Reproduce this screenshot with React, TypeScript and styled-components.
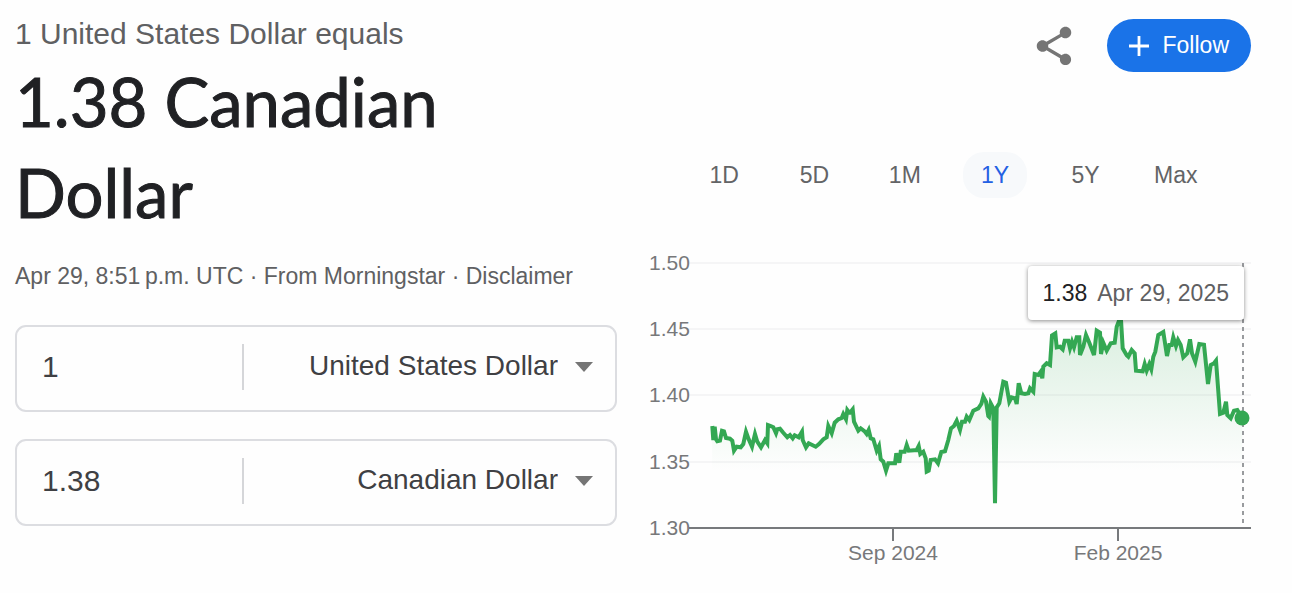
import React from "react";
import styled, { createGlobalStyle, css } from "styled-components";
import { MdShare } from "react-icons/md";

const Global = createGlobalStyle`
  *, *::before, *::after { box-sizing: border-box; }
  body {
    margin: 0;
    background: #fefefe;
    font-family: "Liberation Sans", Arial, sans-serif;
    color: #202124;
  }
  button, input, select { font-family: inherit; }
`;

const Page = styled.main`
  display: grid;
  grid-template-columns: minmax(0, 1fr) minmax(0, 1fr);
  gap: 32px;
  padding: 16px 41px 16px 15px;
`;

const Column = styled.section`
  display: flex;
  flex-direction: column;
`;

const Lead = styled.p`
  margin: 0;
  font-size: 30px;
  line-height: 36px;
  color: #5f6062;
`;

const Headline = styled.h1`
  margin: 4px 96px 0 0;
  font-family: Lato, "Liberation Sans", sans-serif;
  font-weight: 400;
  font-size: 67px;
  line-height: 91px;
  color: #202124;
  -webkit-text-stroke: 1px #202124;
`;

const Meta = styled.p`
  margin: 24px 0 0;
  font-size: 23px;
  line-height: 28px;
  color: #5f6062;
  white-space: nowrap;
`;

const MetaLink = styled.a`
  color: inherit;
  text-decoration: none;
`;

const Form = styled.form`
  display: flex;
  flex-direction: column;
  gap: 27px;
  margin-top: 35px;
`;

const CurrencyRow = styled.div`
  display: flex;
  align-items: center;
  height: 87px;
  padding-bottom: 4px;
  border: 2px solid #dcdde1;
  border-radius: 11px;
`;

const Amount = styled.input`
  flex: 0 0 38%;
  min-width: 0;
  height: 46px;
  padding: 0 25px;
  border: 0;
  border-right: 2px solid #d5d6d9;
  background: transparent;
  font-size: 30px;
  color: #3f4043;
  outline: none;
`;

const Picker = styled.div`
  position: relative;
  flex: 1;
  min-width: 0;
`;

const Select = styled.select`
  width: 100%;
  height: 46px;
  padding: 0 57px 2px 16px;
  border: 0;
  background: transparent;
  appearance: none;
  font-size: 28px;
  text-align-last: right;
  color: #3f4043;
  outline: none;
`;

const Caret = styled.svg`
  position: absolute;
  right: 22px;
  top: 18px;
  width: 18px;
  height: 10px;
  pointer-events: none;
  fill: #757575;
`;

const Actions = styled.div`
  display: flex;
  justify-content: flex-end;
  align-items: center;
  gap: 30px;
  margin-top: 3px;
`;

const ShareButton = styled.button`
  display: flex;
  padding: 0;
  border: 0;
  background: none;
  color: #757575;
  cursor: pointer;
`;

const FollowButton = styled.button`
  display: flex;
  align-items: center;
  gap: 14px;
  height: 53px;
  padding: 0 22px;
  border: 0;
  border-radius: 27px;
  background: #1a73e8;
  color: #fff;
  font-size: 23px;
  cursor: pointer;
`;

const Ranges = styled.div`
  display: grid;
  grid-template-columns: repeat(6, 1fr);
  justify-items: center;
  margin: 80px 30px 0;
`;

const RangeButton = styled.button<{ $active: boolean }>`
  min-width: 64px;
  height: 46px;
  padding: 0 8px;
  border: 0;
  border-radius: 21px;
  background: transparent;
  font-size: 23px;
  color: #636466;
  cursor: pointer;
  ${({ $active }) =>
    $active &&
    css`
      background: #f7f9fb;
      color: #2360e3;
    `}
`;

const ChartArea = styled.div`
  position: relative;
  margin-top: 52px;
`;

const Chart = styled.svg`
  display: block;
  width: 100%;
  height: auto;
`;

const AxisLabel = styled.text`
  font-size: 21px;
  fill: #77787a;
`;

const Tooltip = styled.div`
  position: absolute;
  top: 16px;
  right: 7px;
  display: flex;
  align-items: center;
  gap: 10px;
  height: 54px;
  padding: 0 15px;
  border-radius: 4px;
  background: #fff;
  box-shadow: 0 1px 4px rgba(0, 0, 0, 0.45);
  font-size: 23px;
  color: #5f6062;
  white-space: nowrap;
`;

const TooltipValue = styled.span`
  color: #202124;
`;

/* Exchange-rate trace, split into stretches of the year; each point is in thirds of a chart unit. */
const stretches: { x: number; y: number; points: number[][] }[] = [
  {
    x: 51,
    y: 130,
    points: [
      [37, 138], [40, 180], [44, 140], [48, 178], [52, 184], [60, 182], [66, 152], [72, 154], [78, 174], [90, 176],
      [97, 182], [102, 212], [110, 200], [122, 202], [130, 192], [138, 155], [146, 178], [156, 200],
      [165, 162], [172, 185], [183, 202], [195, 180], [202, 190], [204, 135], [212, 138], [220, 142],
      [228, 160], [232, 148], [240, 146], [250, 158], [262, 172], [270, 165], [278, 175], [284, 166],
      [296, 172], [306, 155], [308, 180], [318, 202], [326, 190], [335, 194], [347, 200], [357, 192],
      [370, 178], [380, 172], [385, 138], [395, 160], [404, 128], [415, 118], [425, 114], [430, 102],
      [438, 118], [442, 90], [448, 98],
    ],
  },
  {
    x: 191,
    y: 130,
    points: [
      [30, 98], [38, 88], [42, 125], [55, 152], [62, 145], [75, 155], [80, 162], [86, 150], [92, 175],
      [100, 178], [110, 212], [117, 198], [122, 238], [130, 245], [138, 272], [145, 250], [165, 250],
      [169, 220], [178, 248], [182, 215], [194, 215], [200, 195], [206, 212], [230, 210], [236, 198],
      [241, 222], [250, 215], [257, 235], [260, 275], [266, 272], [272, 240], [285, 238], [294, 250],
      [304, 216], [315, 214], [325, 180], [333, 145], [342, 138], [350, 122], [360, 150], [366, 125],
      [375, 125], [380, 110], [388, 120], [400, 92], [415, 85], [424, 72], [430, 50], [438, 65],
      [445, 108],
    ],
  },
  {
    x: 331,
    y: 60,
    points: [
      [27, 320], [32, 280], [40, 295], [45, 580], [50, 292], [58, 280], [70, 215], [78, 218], [88, 275],
      [95, 262], [105, 265], [110, 282], [116, 220], [124, 250], [135, 252], [145, 250], [150, 235],
      [160, 245], [164, 192], [175, 195], [182, 185], [187, 205], [190, 170], [200, 160], [210, 165],
      [216, 76], [226, 70], [230, 112], [240, 110], [248, 118], [254, 92], [265, 92], [270, 115],
      [276, 95], [282, 112], [290, 82], [298, 82], [300, 135], [310, 110], [318, 75], [328, 98],
      [342, 135], [350, 62], [360, 68], [363, 132], [370, 98], [380, 122], [392, 100], [404, 98],
      [410, 50], [418, 30], [423, 30], [428, 115], [440, 136],
    ],
  },
  {
    x: 461,
    y: 60,
    points: [
      [55, 140], [65, 120], [74, 130], [78, 182], [98, 184], [104, 162], [110, 182], [118, 162],
      [124, 178], [130, 140], [136, 125], [145, 75], [160, 66], [171, 138], [178, 105], [185, 105],
      [190, 82], [198, 108], [204, 90], [212, 105], [220, 142], [232, 130], [240, 88], [246, 130],
      [256, 155], [268, 102], [282, 104], [294, 222], [302, 165], [312, 160], [318, 152], [330, 312],
      [340, 308], [348, 275], [352, 315], [362, 325], [372, 302], [382, 300], [397, 325],
    ],
  },
];

const trace = stretches
  .flatMap((s) => s.points.map(([px, py]) => `${(s.x + px / 3).toFixed(1)} ${(s.y + py / 3).toFixed(1)}`))
  .join(" L");

const levels = [
  { label: "1.50", y: 13 },
  { label: "1.45", y: 79 },
  { label: "1.40", y: 145 },
  { label: "1.35", y: 212 },
  { label: "1.30", y: 278 },
];

const months = [
  { label: "Sep 2024", x: 244 },
  { label: "Feb 2025", x: 469 },
];

const ranges = ["1D", "5D", "1M", "1Y", "5Y", "Max"];
const currencies = ["United States Dollar", "Canadian Dollar"];

function CurrencyField({ id, amount, currency }: { id: string; amount: string; currency: string }) {
  return (
    <CurrencyRow>
      <Amount id={`${id}-amount`} aria-label={`Amount in ${currency}`} defaultValue={amount} />
      <Picker>
        <Select id={`${id}-currency`} aria-label="Currency" defaultValue={currency}>
          {currencies.map((c) => (
            <option key={c}>{c}</option>
          ))}
        </Select>
        <Caret viewBox="0 0 18 10" aria-hidden="true">
          <path d="M0 0h18L9 10z" />
        </Caret>
      </Picker>
    </CurrencyRow>
  );
}

function RateChart() {
  return (
    <ChartArea>
      <Chart viewBox="0 0 602 325" role="img" aria-label="Exchange rate over one year">
        <defs>
          <linearGradient id="fade" gradientUnits="userSpaceOnUse" x1="0" y1="70" x2="0" y2="222">
            <stop offset="0" stopColor="#34a853" stopOpacity="0.18" />
            <stop offset="1" stopColor="#34a853" stopOpacity="0" />
          </linearGradient>
        </defs>
        {levels.map(({ label, y }, i) => {
          const base = i === levels.length - 1;
          return (
            <g key={label}>
              <line x1="40" x2="602" y1={y} y2={y} stroke={base ? "#77797c" : "#f5f5f6"} strokeWidth="2" />
              <AxisLabel x="0" y={y + 7}>
                {label}
              </AxisLabel>
            </g>
          );
        })}
        {months.map(({ label, x }) => (
          <g key={label}>
            <line x1={x} x2={x} y1="278" y2="291" stroke="#77797c" strokeWidth="2" />
            <AxisLabel x={x} y="310" textAnchor="middle">
              {label}
            </AxisLabel>
          </g>
        ))}
        <path d={`M63 278 L${trace} L593 278 Z`} fill="url(#fade)" />
        <line x1="594" x2="594" y1="13" y2="276" stroke="#999b9e" strokeWidth="2" strokeDasharray="4 4" />
        <path d={`M${trace}`} fill="none" stroke="#34a853" strokeWidth="4" />
        <circle cx="593" cy="168" r="7.5" fill="#34a853" />
      </Chart>
      <Tooltip role="tooltip">
        <TooltipValue>1.38</TooltipValue>
        <span>Apr 29, 2025</span>
      </Tooltip>
    </ChartArea>
  );
}

export default function App() {
  return (
    <>
      <Global />
      <Page>
        <Column>
          <Lead>1 United States Dollar equals</Lead>
          <Headline>1.38 Canadian Dollar</Headline>
          <Meta>
            Apr 29, 8:51{"\u202f"}p.m. UTC · From Morningstar · <MetaLink href="#disclaimer">Disclaimer</MetaLink>
          </Meta>
          <Form>
            <CurrencyField id="from" amount="1" currency="United States Dollar" />
            <CurrencyField id="to" amount="1.38" currency="Canadian Dollar" />
          </Form>
        </Column>
        <Column>
          <Actions>
            <ShareButton type="button" aria-label="Share">
              <MdShare size={46} />
            </ShareButton>
            <FollowButton type="button">
              <svg width="20" height="20" viewBox="0 0 20 20" aria-hidden="true">
                <path d="M10 0v20M0 10h20" stroke="currentColor" strokeWidth="2.8" />
              </svg>
              Follow
            </FollowButton>
          </Actions>
          <Ranges>
            {ranges.map((r) => (
              <RangeButton key={r} type="button" $active={r === "1Y"} aria-pressed={r === "1Y"}>
                {r}
              </RangeButton>
            ))}
          </Ranges>
          <RateChart />
        </Column>
      </Page>
    </>
  );
}
